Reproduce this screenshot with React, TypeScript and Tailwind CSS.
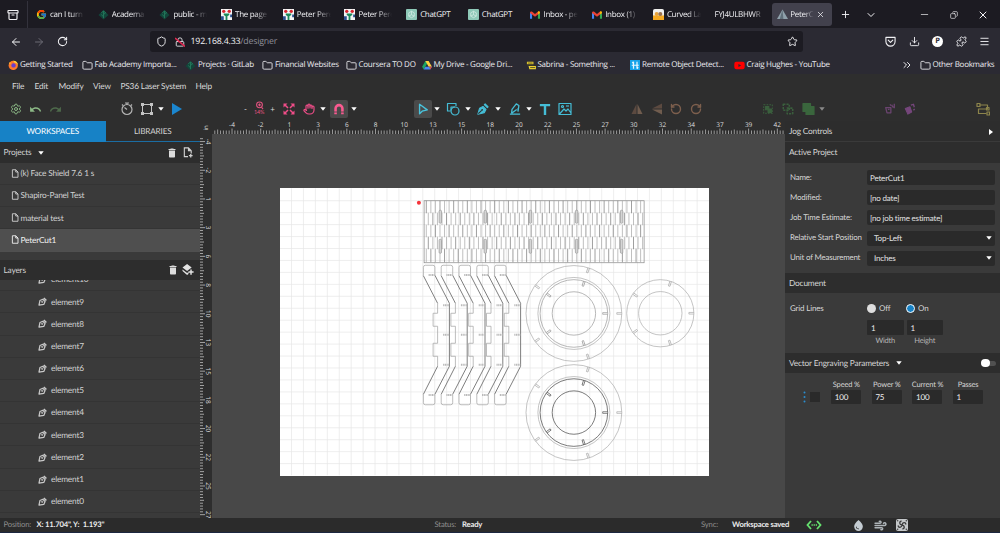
import React from "react";
import {
  Archive, ArrowLeft, ArrowRight, RotateCw, Shield, Star, Download, Menu, Folder, ChevronsRight, Plus,
  ChevronDown, Minus, X, Copy, Settings, Hand, RotateCcw, Puzzle, Lock, Wind, Fan,
} from "lucide-react";
import { FcGoogle } from "react-icons/fc";
import { MdUndo, MdRedo, MdDelete, MdWaterDrop } from "react-icons/md";
import { FaYoutube, FaFirefoxBrowser } from "react-icons/fa";

type Kids = { children?: React.ReactNode };

/* ---------- favicons ---------- */

const Academany = () => (
  <svg viewBox="0 0 12 12" className="size-[11px] shrink-0">
    <path d="M.5 6.500 6 1l5.500 5.500L6 11.500z" fill="#12453a" />
    <path d="M6 2v8M6 6 8.500 4M6 8.500 3.500 6M3.500 4.500 6 2l2.500 2.500" stroke="#23785b" strokeWidth="1" fill="none" />
  </svg>
);
const FabPage = () => (
  <svg viewBox="0 0 12 12" className="size-[11px] shrink-0">
    <rect width="12" height="12" fill="#f4f4f4" />
    <circle cx="3" cy="2.500" r="1.800" fill="#d8252f" />
    <circle cx="9" cy="2.500" r="1.800" fill="#d8252f" />
    <path d="M3 5h6v1.500L7 8v4H5V8L3 6.500z" fill="#1b8a5a" />
    <path d="M0 8h3v4H0zM10 6h2v3h-2z" fill="#2a4f8f" />
  </svg>
);
const Gpt = () => (
  <svg viewBox="0 0 12 12" className="size-[11px] shrink-0">
    <rect width="12" height="12" rx="1" fill="#8ec9b8" />
    <path d="M6 2.500 9 4.200v3.600L6 9.500 3 7.800V4.200zM6 2.500v3.700M3 7.800l3-1.600 3 1.600" stroke="#d9efe8" strokeWidth=".8" fill="none" />
  </svg>
);
const Gmail = () => (
  <svg viewBox="0 0 12 9" className="mx-[.5px] h-[8px] w-[10px] shrink-0">
    <path d="M0 1.500 2.500 3v6H0z" fill="#4285f4" />
    <path d="M12 1.500 9.500 3v6H12z" fill="#34a853" />
    <path d="M0 2C0 .2 1.500-.3 2.700.6L6 3.200 9.300.6C10.500-.3 12 .2 12 2L6 6.500z" fill="#ea4335" />
    <path d="M9.500.5C11-.5 12 .5 12 2L9.500 3.800z" fill="#fbbc04" />
  </svg>
);
const Curved = () => (
  <svg viewBox="0 0 12 12" className="size-[11px] shrink-0">
    <rect width="12" height="12" rx="2" fill="#f0f0ee" />
    <path d="M0 7h12v5H0z" fill="#f4a921" />
    <circle cx="4" cy="5.500" r="2.200" fill="#e8a33a" />
    <circle cx="8" cy="5.500" r="2.200" fill="#99714d" />
  </svg>
);
const Glow = () => (
  <svg viewBox="0 0 12 12" className="size-[11px] shrink-0">
    <path d="M6 .5 12 11H0z" fill="#8fa1ab" />
    <path d="M6 .5 7 11H3z" fill="#60707b" />
  </svg>
);
const Drive = () => (
  <svg viewBox="0 0 12 11" className="h-[9px] w-[10px] shrink-0">
    <path d="M4 0h4L4 7 2 10.500 0 7z" fill="#1da462" />
    <path d="M4 0h4l4 7H8z" fill="#ffcf3f" />
    <path d="M4 7h8l-2 3.500H2z" fill="#4688f4" />
    <path d="M8.500 7H12l-2 3.500z" fill="#e04a3c" />
  </svg>
);
const Sabrina = () => (
  <svg viewBox="0 0 12 11" className="h-[9px] w-[10px] shrink-0">
    <path d="M1 1h8v3H1zM3 6h9v4H4z" fill="#ecd233" />
    <path d="M2 2.500h6M1 5h9M5 8h6" stroke="#47451e" strokeWidth="1" />
  </svg>
);
const Remote = () => (
  <svg viewBox="0 0 12 12" className="size-[10.500px] shrink-0">
    <rect width="12" height="12" fill="#17a3ea" />
    <path d="M4 2v8M8 2v8M2 6h8M2.500 3.500 4 2M8 10l1.500-1.500" stroke="#e9f7ff" strokeWidth="1.400" fill="none" />
  </svg>
);
const Firefox = () => (
  <svg viewBox="0 0 12 12" className="size-[10.500px] shrink-0">
    <circle cx="6" cy="6.200" r="5.300" fill="#ff7a2a" />
    <path d="M6 .8c3.500 0 5.500 2.500 5.400 5.600C11 4.500 9.500 3 7.500 3z" fill="#ffd23c" />
    <path d="M1 4.500C1.500 3 2 2.500 2.500 2c0 1 .5 1.500 1.500 2z" fill="#ffb02e" />
    <path d="M.8 7.500c.8 3 4 4.800 7.200 3.800C5 12 1.500 10.500.8 7.500z" fill="#e8205f" />
    <circle cx="6.300" cy="6.200" r="2.500" fill="#6a3fd0" />
  </svg>
);

/* ---------- browser chrome ---------- */

const tabs: { icon: React.ReactNode; label: string }[] = [
  { icon: <FcGoogle className="size-[11px] shrink-0" />, label: "can I turn" },
  { icon: <Academany />, label: "Academa" },
  { icon: <Academany />, label: "public - m" },
  { icon: <FabPage />, label: "The page" },
  { icon: <FabPage />, label: "Peter Pere" },
  { icon: <FabPage />, label: "Peter Pere" },
  { icon: <Gpt />, label: "ChatGPT" },
  { icon: <Gpt />, label: "ChatGPT" },
  { icon: <Gmail />, label: "Inbox - pe" },
  { icon: <Gmail />, label: "Inbox (1)" },
  { icon: <Curved />, label: "Curved La" },
];

const Fade = ({ children }: Kids) => (
  <span className="w-[40px] overflow-hidden whitespace-nowrap [mask-image:linear-gradient(to_right,black_50%,transparent_85%)]">
    {children}
  </span>
);

const TabBar = () => (
  <div className="flex h-[28px] items-center bg-[#1c1b22] pt-px text-[8px] tracking-[-0.3px] text-[#f2f2f5]">
    <div className="flex h-full w-[28px] items-center border-r border-[#33323c] pl-[7px]">
      <Archive className="size-[12px]" strokeWidth={2.300} />
    </div>
    <div className="flex pl-[8px]">
      {tabs.map((t, i) => (
        <div key={i} className="flex w-[61.700px] items-center gap-[3px]">
          {t.icon}
          {t.label === "ChatGPT" ? <span>{t.label}</span> : <Fade>{t.label}</Fade>}
        </div>
      ))}
    </div>
    <div className="w-[57.300px] overflow-hidden whitespace-nowrap [mask-image:linear-gradient(to_right,black_65%,transparent_88%)]">
      FYJ4ULBHWR
    </div>
    <div className="flex h-[23px] w-[60px] items-center rounded-[3px] bg-[#42414d] pl-[5px]">
      <Glow />
      <span className="ml-[2.500px] w-[23.500px] overflow-hidden whitespace-nowrap [mask-image:linear-gradient(to_right,black_60%,transparent)]">PeterC</span>
      <X className="ml-[2px] size-[9px]" />
    </div>
    <Plus className="ml-[8px] size-[11px]" />
    <ChevronDown className="ml-[14px] size-[12px]" />
    <Minus className="ml-[42px] size-[11px]" strokeWidth={1.500} />
    <Copy className="ml-[20px] size-[8px] -scale-x-100" />
    <X className="ml-[19px] size-[12px]" />
  </div>
);

const Pocket = () => (
  <svg viewBox="0 0 12 12" className="size-[11px]" fill="none" stroke="currentColor" strokeWidth="1.200" strokeLinecap="round" strokeLinejoin="round">
    <path d="M1 1.500h10V6a5 5 0 0 1-10 0zM3.500 4.500 6 7l2.500-2.500" />
  </svg>
);

const NavBar = () => (
  <div className="flex h-[27px] items-center bg-[#2b2a33] text-[#f2f2f5]">
    <ArrowLeft className="ml-[10px] size-[12px]" />
    <ArrowRight className="ml-[11px] size-[12px] text-[#6c6b75]" />
    <RotateCw className="ml-[12px] size-[11px]" strokeWidth={2.200} />
    <div className="ml-[82px] flex h-[21px] w-[653px] items-center rounded-[3px] bg-[#1c1b22]">
      <Shield className="ml-[5.500px] size-[11px]" />
      <span className="relative ml-[8px] flex">
        <Lock className="size-[10px]" />
        <svg viewBox="0 0 10 10" className="absolute inset-0 size-[10px]"><path d="M0 1 10 9.500" stroke="#e22850" strokeWidth="1.600" /></svg>
      </span>
      <span className="ml-[6px] pt-px text-[8.800px] tracking-[-0.2px] whitespace-nowrap">192.168.4.33<span className="text-[#8f8f99]">/designer</span></span>
      <Star className="mr-[5px] ml-auto size-[11px]" />
    </div>
    <div className="ml-[82px] flex items-center gap-[12.500px]">
      <Pocket />
      <Download className="size-[11px]" />
      <span className="flex size-[11px] items-center justify-center rounded-full bg-white text-[7.500px] font-bold text-[#2b2a33]">P</span>
      <Puzzle className="size-[11px]" />
      <Menu className="size-[11px]" />
    </div>
  </div>
);

const Fold = () => <Folder className="size-[11px] shrink-0" strokeWidth={1.900} />;

const Mark = ({ icon, label, w }: { icon: React.ReactNode; label: string; w: string }) => (
  <div className={`flex items-center gap-[2px] whitespace-nowrap ${w}`}>{icon}<span>{label}</span></div>
);

const Bookmarks = () => (
  <div className="flex h-[19px] items-center bg-[#2b2a33] pt-px pl-[7.500px] text-[8px] tracking-[-0.27px] text-[#ececf0]">
    <Mark w="w-[74px]" icon={<Firefox />} label="Getting Started" />
    <Mark w="w-[103.500px]" icon={<Fold />} label="Fab Academy Importa..." />
    <Mark w="w-[77px]" icon={<Academany />} label="Projects · GitLab" />
    <Mark w="w-[83.500px]" icon={<Fold />} label="Financial Websites" />
    <Mark w="w-[76px]" icon={<Fold />} label="Coursera TO DO" />
    <Mark w="w-[104px]" icon={<Drive />} label="My Drive - Google Dri..." />
    <Mark w="w-[104px]" icon={<Sabrina />} label="Sabrina - Something ..." />
    <Mark w="w-[104px]" icon={<Remote />} label="Remote Object Detect..." />
    <Mark w="w-[167px]" icon={<FaYoutube className="size-[11px] text-[#ff0000]" />} label="Craig Hughes - YouTube" />
    <ChevronsRight className="size-[12px]" />
    <Mark w="ml-[7px]" icon={<Fold />} label="Other Bookmarks" />
  </div>
);

/* ---------- application menu and toolbar ---------- */

const MenuBar = () => (
  <div className="flex h-[23px] items-center bg-[#2e2e2e] pt-px pl-[12px] text-[8.300px] text-[#d8d8d8]">
    <span className="w-[22.500px]">File</span>
    <span className="w-[24px]">Edit</span>
    <span className="w-[34.500px]">Modify</span>
    <span className="w-[27.500px]">View</span>
    <span className="w-[75px] whitespace-nowrap">PS36 Laser System</span>
    <span>Help</span>
  </div>
);

const Caret = ({ className = "" }: { className?: string }) => (
  <svg viewBox="0 0 6 4" className={`h-[4px] w-[6px] shrink-0 ${className}`}><path d="M.3.3h5.400L3 3.700z" fill="currentColor" /></svg>
);

const Svg = ({ className, children }: Kids & { className: string }) => (
  <svg viewBox="0 0 14 14" className={`shrink-0 ${className}`} fill="none" stroke="currentColor" strokeWidth="1.200" strokeLinejoin="round">
    {children}
  </svg>
);

const Toolbar = () => (
  <div className="flex h-[24px] items-center bg-[#2e2e2e] text-[#d8d8d8] [&>svg]:shrink-0">
    <Settings className="ml-[9.500px] size-[12px] text-[#8cb986]" />
    <MdUndo className="ml-[7px] size-[13px] text-[#8cb986]" />
    <MdRedo className="ml-[7px] size-[13px] text-[#4e6a4b]" />
    <Svg className="ml-[58.500px] size-[14px] text-[#b5b5b5]">
      <circle cx="7" cy="7.500" r="5" /><path d="M5 1h4M7 1v1.500M2 2.500l1 1M12 2.500l-1 1M4.500 5.500 7 7.500" />
    </Svg>
    <Svg className="ml-[6px] size-[14px] text-[#c4c4c4]">
      <path d="M2.500 2.500h9v9h-9z" strokeWidth="1" />
      <path d="M1 1h3v3H1zM10 1h3v3h-3zM1 10h3v3H1zM10 10h3v3h-3z" fill="currentColor" stroke="none" />
    </Svg>
    <Caret className="ml-[4px] text-white" />
    <svg viewBox="0 0 12 14" className="ml-[7px] h-[14px] w-[12px] text-[#1b86cf]"><path d="M1 1v12l10-6z" fill="currentColor" /></svg>
    <span className="ml-[59.500px] w-[6px] text-center text-[8px]">-</span>
    <div className="ml-[3.500px] flex w-[14px] flex-col items-center text-[#e0527f]">
      <Svg className="size-[9px]">
        <circle cx="7" cy="6" r="4.500" strokeWidth="1.700" /><path d="M5 6h4M7 4v4M10 9.500l2.500 3" strokeWidth="1.700" />
      </Svg>
      <span className="text-[5.500px] leading-[7px]">14%</span>
    </div>
    <span className="ml-[3.500px] w-[6px] text-center text-[8px]">+</span>
    <Svg className="ml-[6.500px] size-[14px] text-[#ef4d88]">
      <path d="M1.500 1.500h4l-4 4zM12.500 1.500h-4l4 4zM1.500 12.500h4l-4-4zM12.500 12.500h-4l4-4z" fill="currentColor" stroke="none" />
      <path d="m3 3 3 3M11 3 8 6M3 11l3-3M11 11 8 8" strokeWidth="1.500" />
    </Svg>
    <Hand className="ml-[6.500px] size-[12px] text-[#ef4d88]" strokeWidth={2.300} />
    <Caret className="ml-[5px] text-white" />
    <span className="ml-[4.500px] flex size-[18px] shrink-0 items-center justify-center rounded-[2px] bg-[#4a4a4a] text-[#fa5a90]">
      <Svg className="size-[12px]">
        <path d="M3 13V6.500a4 4 0 0 1 8 0V13" strokeWidth="3" /><path d="M1 10.500h5M8 10.500h5" stroke="#4a4a4a" strokeWidth="1" />
      </Svg>
    </span>
    <Caret className="ml-[2.500px] text-white" />
    <span className="ml-[57.500px] flex size-[18px] shrink-0 items-center justify-center rounded-[2px] bg-[#4a4a4a] text-[#49c3dc]">
      <Svg className="size-[12px]"><path d="M3 1.500v11l3-3 6-1.500z" strokeWidth="1.600" /></Svg>
    </span>
    <Caret className="ml-[2px] text-white" />
    <Svg className="ml-[6px] size-[14px] text-[#45bdd6]"><path d="M4.500 9H1.500V1.500H10V4" /><circle cx="9" cy="9" r="4" /><path d="M5 8.500V5h4" /></Svg>
    <Caret className="ml-[4.500px] text-white" />
    <Svg className="ml-[6.500px] size-[12px] text-[#45bdd6]">
      <path d="m1 13 2-7 4-2 3.500 3.500-2 4z" fill="currentColor" /><path d="m8.500 2 3.500 3.500 1-1L9.500 1z" fill="currentColor" /><path d="m1.500 12.500 4-4" stroke="#2e2e2e" /><circle cx="6" cy="8" r="1" fill="#2e2e2e" stroke="none" />
    </Svg>
    <Caret className="ml-[6px] text-white" />
    <Svg className="ml-[7.500px] size-[12px] text-[#45bdd6]"><path d="M1 13h12M3 12l.5-4.500L8.500 1l3 2-1 7M3 12l6-4.500M10.500 6v4" strokeWidth="1.500" /></Svg>
    <Caret className="ml-[5.500px] text-white" />
    <Svg className="ml-[7px] size-[12px] text-[#45bdd6]"><path d="M1 2.500h12M7 2v12" strokeWidth="2.800" /></Svg>
    <Svg className="ml-[6.500px] size-[14px] text-[#45bdd6]">
      <path d="M1 1.500h12v11H1zM1.500 12 6 7l2 2 2-2 3 4" /><circle cx="4.500" cy="4.500" r="1" /><path d="M8 4h3" />
    </Svg>
    <svg viewBox="0 0 12 12" className="ml-[59.500px] size-[12px]"><path d="M5.500 1v10H.5z" fill="#5c4a40" /><path d="M6.500 1v10h5z" fill="#705c4e" /></svg>
    <svg viewBox="0 0 12 12" className="ml-[8px] size-[12px]"><path d="M11 .5v5H1z" fill="#5c4a40" /><path d="M11 11.500v-5H1z" fill="#705c4e" /></svg>
    <RotateCcw className="ml-[7px] size-[12px] text-[#7d5f4d]" strokeWidth={2.800} />
    <RotateCw className="ml-[8px] size-[12px] text-[#7d5f4d]" strokeWidth={2.800} />
    <Svg className="ml-[60px] size-[12px] text-[#3a5f3d]">
      <path d="M2 2h10v10H2z" strokeDasharray="2 1.300" /><path d="M4 4h4v4H4zM7 7h4v4H7z" fill="currentColor" />
    </Svg>
    <Svg className="ml-[8px] size-[12px] text-[#3a5f3d]">
      <path d="M1.500 1.500h7v7h-7zM6 6h6.500v6.500H6z" strokeDasharray="2.500 1.200" strokeWidth="1.800" />
    </Svg>
    <Svg className="ml-[7px] size-[14px] text-[#3a663d]"><path d="M2 1.500h7.500v3H13v8H5v-3H2z" fill="currentColor" /></Svg>
    <Caret className="ml-[3.500px] text-[#8a8a8a]" />
    <Svg className="ml-[59.500px] size-[12px] text-[#6b4470]"><path d="M2 5.500h6v6H3.500zM4.500 7.500h2M9 2l1 2.500 2 .5M12 1v5M8 3l-1-1.500" strokeWidth="1.500" /></Svg>
    <Svg className="ml-[8px] size-[12px] text-[#75467b]"><path d="M1.500 6.500 7 4.500l2 6-4.500 2.500z" fill="currentColor" /><path d="M8 2.500 11 1.500l1 3.500M11 8.500l1.500-1.500" strokeWidth="1.600" /></Svg>
    <Svg className="ml-[60px] size-[14px] text-[#8c844b]">
      <path d="M3.500 3h8v4h-9v4.500h8" /><path d="M1 1.500h3v3H1zM11 10h2.500v3H11zM10.500 5.500h2.500v2.500h-2.500z" />
    </Svg>
  </div>
);

/* ---------- left sidebar ---------- */

const Trash = () => <MdDelete className="size-[12px] text-[#dcdcdc]" />;

const PenIcon = () => (
  <Svg className="size-[9px] text-[#c9c9c9]">
    <path d="m1.500 12.500 1.500-7 4.500-2L11 7l-2 4.500z" strokeWidth="1.900" /><circle cx="6.500" cy="7.500" r="1" strokeWidth="1.500" />
    <path d="m9 1.500 4 4" strokeWidth="2.500" />
  </Svg>
);

const Page = ({ plus }: { plus?: boolean }) => (
  <svg viewBox="0 0 10 12" className={plus ? "h-[11px] w-[10px]" : "h-[9px] w-[8px]"} fill="none" stroke="currentColor" strokeWidth="1.200">
    <path d={plus ? "M5 10.500H1V1h4.500L8.500 4v3M5.500 1v3h3" : "M1.500 1h4.500L9 4v7H1.500zM6 1v3h3"} />
    {plus && <path d="M8 7.500v4M6 9.500h4" strokeWidth="1.400" />}
  </svg>
);

const projects = ["(k) Face Shield 7.6 1 s", "Shapiro-Panel Test", "material test", "PeterCut1"];
const layers = [10, 9, 8, 7, 6, 5, 4, 3, 2, 1, 0];

const Sidebar = () => (
  <aside className="flex w-[200px] shrink-0 flex-col bg-[#3a3a3a] text-[8.300px] text-[#d2d2d2]">
    <div className="flex h-[21px] shrink-0 text-[8.200px]">
      <div className="flex w-[105.500px] items-center justify-center bg-[#1782c6] text-white">WORKSPACES</div>
      <div className="flex flex-1 items-center justify-center border-b border-[#1b6da3] bg-[#2e2e2e] pt-px">LIBRARIES</div>
    </div>
    <div className="flex h-[21px] shrink-0 items-center bg-[#2d2d2d] pl-[3.500px]">
      <span>Projects</span>
      <Caret className="ml-[7px] text-white" />
      <div className="mr-[7px] ml-auto flex gap-[5px]"><Trash /><Page plus /></div>
    </div>
    {projects.map((p, i) => (
      <div key={p} className={`flex h-[22.150px] shrink-0 items-center gap-[2px] border-b pl-[10.500px] ${i === 3 ? "border-[#505050] bg-[#4f4f4f] text-[#f2f2f2]" : "border-[#343434]"}`}>
        <Page />
        <span>{p}</span>
      </div>
    ))}
    <div className="h-[8.400px] shrink-0" />
    <div className="flex h-[20px] shrink-0 items-center bg-[#2d2d2d] pl-[3.500px]">
      <span>Layers</span>
      <div className="mr-[6px] ml-auto flex gap-[3px]">
        <Trash />
        <svg viewBox="0 0 13 12" className="h-[11px] w-[12px]" fill="#e2e2e2">
          <path d="m5.500 0 5 3.800-5 3.700L.5 3.800zM.5 6l5 3.700L7 8.800V11l-1.500.9L.5 7.500zM9 6h1.600v2h2v1.600h-2v2H9v-2H7V8h2z" />
        </svg>
      </div>
    </div>
    <div className="min-h-0 flex-1 overflow-hidden">
      <div className="-mt-[11px]">
        {layers.map((n) => (
          <div key={n} className="flex h-[22.200px] items-center gap-[4.500px] border-b border-[#343434] pl-[37.500px]">
            <PenIcon />
            <span>element{n}</span>
          </div>
        ))}
      </div>
    </div>
  </aside>
);

/* ---------- rulers and canvas ---------- */

const marks = [-4, -2, 1, 3, 6, 8, 10, 13, 15, 18, 20, 22, 25, 27, 30, 32, 34, 37, 39, 42];
const STEP = 28.7;

const HRuler = () => (
  <svg viewBox="200 0 585 13" className="h-[13px] w-[585px] shrink-0 bg-[#2e2e2e] tracking-normal">
    {Array.from({ length: 199 }, (_, i) => {
      const x = 214.800 + (i * STEP) / 10;
      const n = i - 6;
      return <path key={i} d={`M${x} ${n % 10 === 0 ? 7.5 : n % 5 === 0 ? 8.5 : 9.5}V13`} stroke="#b5b5b5" strokeWidth=".8" />;
    })}
    {marks.map((m, i) => (
      <text key={m} x={232 + i * STEP} y="5.500" textAnchor="middle" fontSize="6.500" fill="#dedede" className="font-['Open_Sans']">{m}</text>
    ))}
    <text transform="translate(207.500 9.500) rotate(-90)" fontSize="6" fill="#dedede" className="font-['Open_Sans']">in</text>
  </svg>
);

const VRuler = () => (
  <svg viewBox="0 134 12 384" className="h-full w-[12px] shrink-0 bg-[#2e2e2e] tracking-normal">
    {Array.from({ length: 132 }, (_, i) => {
      const y = 138.700 + (i * STEP) / 10;
      const n = i - 1;
      return <path key={i} d={`M0 ${y}H${n % 10 === 0 ? 5 : n % 5 === 0 ? 4 : 3}`} stroke="#c0c0c0" strokeWidth=".8" />;
    })}
    {marks.slice(0, 14).map((m, i) => (
      <text key={m} transform={`translate(6.200 ${141.6 + i * STEP}) rotate(90)`} textAnchor="middle" fontSize="6.500" fill="#dedede" className="font-['Open_Sans']">{m}</text>
    ))}
  </svg>
);

const Hinge = () => {
  const rows = [200.5, 212.5, 224.5, 236.500, 248.500];
  return (
    <g fill="none" stroke="#999" strokeWidth=".7">
      <rect x="424" y="200.500" width="220" height="62" stroke="#888" />
      {rows.map((y, r) =>
        Array.from({ length: 48 }, (_, c) => (
          <path key={`${r}-${c}`} stroke={c % 3 === r % 3 ? "#777" : "#a5a5a5"} d={`M${426.2 + c * 4.56 + (r % 2 ? 2 : 0)} ${y}v${r === 4 ? 13.5 : 12.5}`} />
        ))
      )}
      {[440.2, 485.200, 530.300, 576.500, 621.500].map((x) => (
        <g key={x} stroke="#999">
          <rect x={x - 1.2} y="210" width="2.400" height="13" rx="1" fill="#d5d5d5" />
          <rect x={x - 1.2} y="239" width="2.400" height="14" rx="1" fill="#d5d5d5" />
        </g>
      ))}
    </g>
  );
};

const Bracket = ({ dx }: { dx: number }) => (
  <g transform={`translate(${dx} 0)`} fill="none" strokeWidth=".7">
    <path stroke="#a0a0a0" d="M423.300 275.500V267q0-2 2-2h7.500q2 0 2 2v8M437.500 303v10h-4.500v13h4.500v17h-4.500v13h4.500v10M423.300 394v8.500q0 2 2 2h7.500q2 0 2-2V394" />
    <path stroke="#707070" strokeWidth=".9" d="m423.300 275.500 14.200 27.500M434.800 275l14.500 28v63l-14.500 28M437.500 366l-14.200 28" />
    <g stroke="#bbb" strokeWidth="2" strokeDasharray="1.200 .5">
      <path d="M428.500 274.800h6M443 305h6M443 334.500h6M443 364.500h6M428.500 394.800h6" />
    </g>
  </g>
);

const Notches = ({ cx, cy, r, color }: { cx: number; cy: number; r: number; color: string }) => (
  <g stroke={color} fill="none">
    {[0, 72, 144, 216, 288].map((a) => (
      <path key={a} transform={`translate(${cx} ${cy}) rotate(${a})`} d={`M${r} -.8H${r - 5}M${r} .8H${r - 5}v-1.600`} strokeWidth=".7" />
    ))}
  </g>
);

const Ring = ({ cx, cy, dark }: { cx: number; cy: number; dark?: boolean }) => (
  <g fill="none" stroke="#aaa" strokeWidth=".7">
    <circle cx={cx} cy={cy} r="47.900" />
    <circle cx={cx} cy={cy} r="36" />
    <circle cx={cx} cy={cy} r="33.800" stroke={dark ? "#444" : "#999"} />
    <circle cx={cx} cy={cy} r="21.700" stroke={dark ? "#444" : "#999"} />
    <Notches cx={cx} cy={cy} r={47.9} color="#aaa" />
    <Notches cx={cx} cy={cy} r={33.800} color={dark ? "#555" : "#999"} />
  </g>
);

const Drawing = () => (
  <svg viewBox="279.900 188 429.500 287" className="size-full">
    <g stroke="#e6e6e6" strokeWidth=".7">
      {Array.from({ length: 35 }, (_, i) => <path key={i} d={`M${279.5 + (i + 1) * 11.930} 188v287`} />)}
      {Array.from({ length: 23 }, (_, i) => <path key={i} d={`M279.500 ${188.5 + (i + 1) * 11.950}h430`} />)}
    </g>
    <Hinge />
    {[0, 17.8, 35.600, 53.400, 71.200].map((dx) => <Bracket key={dx} dx={dx} />)}
    <Ring cx={573.8} cy={313.200} />
    <Ring cx={573.8} cy={412.300} dark />
    <g fill="none" stroke="#aaa" strokeWidth=".7">
      <circle cx="660.200" cy="313" r="33.600" />
      <circle cx="660.200" cy="313" r="21.700" />
      <Notches cx={660.2} cy={313} r={33.600} color="#aaa" />
    </g>
    <circle cx="418.800" cy="202.500" r="2" fill="#f5333a" />
  </svg>
);

const Canvas = () => (
  <main className="flex w-[585px] shrink-0 flex-col">
    <HRuler />
    <div className="flex min-h-0 flex-1">
      <VRuler />
      <div className="flex-1 bg-[#484848] pt-[54px] pl-[67.500px]">
        <div className="h-[287.500px] w-[429.500px] bg-white"><Drawing /></div>
      </div>
    </div>
  </main>
);

/* ---------- properties panel ---------- */

const Field = ({ label, children }: Kids & { label: string }) => (
  <div className="flex h-[20.200px] items-center">
    <span className="w-[77px] text-[7.900px] whitespace-nowrap">{label}</span>
    <div className="flex h-[15px] w-[128px] items-center rounded-[2px] bg-[#2a2a2a] px-[3px] text-[8px] text-[#e2e2e2]">{children}</div>
  </div>
);

const Cell = ({ head, value, w }: { head: string; value: string; w: string }) => (
  <div className={`flex flex-col items-center ${w}`}>
    <span className="text-[7.500px] leading-[11px] whitespace-nowrap">{head}</span>
    <span className="flex h-[14px] w-[30px] items-center rounded-[1px] bg-[#2a2a2a] pl-[3.500px] text-[8px] text-[#eee]">{value}</span>
  </div>
);

const Panel = () => (
  <aside className="flex flex-1 flex-col bg-[#3a3a3a] text-[8.300px] text-[#d6d6d6]">
    <div className="flex h-[21px] items-center justify-between border-b border-[#3a3a3a] bg-[#2d2d2d] pt-px pr-[7px] pl-[4px]">
      <span>Jog Controls</span>
      <svg viewBox="0 0 4 6" className="h-[6px] w-[4px]"><path d="M0 0v6l4-3z" fill="white" /></svg>
    </div>
    <div className="flex h-[21px] items-center bg-[#2d2d2d] pl-[4px]">Active Project</div>
    <div className="h-[110px] pt-[4.500px] pl-[5px]">
      <Field label="Name:">PeterCut1</Field>
      <Field label="Modified:">[no date]</Field>
      <Field label="Job Time Estimate:">[no job time estimate]</Field>
      <Field label="Relative Start Position"><span className="ml-[4px]">Top-Left</span><Caret className="ml-auto text-white" /></Field>
      <Field label="Unit of Measurement"><span className="ml-[4px]">Inches</span><Caret className="ml-auto text-white" /></Field>
    </div>
    <div className="flex h-[20px] items-center bg-[#2d2d2d] pl-[4px]">Document</div>
    <div className="h-[60px] pt-[8px] pl-[5px] text-[8px]">
      <div className="flex h-[14px] items-center">
        <span className="w-[77px]">Grid Lines</span>
        <span className="size-[9px] rounded-full bg-[#dedede]" />
        <span className="ml-[3px] w-[27px]">Off</span>
        <span className="size-[9px] rounded-full border-[1.500px] border-white bg-[#1782c6]" />
        <span className="ml-[3px]">On</span>
      </div>
      <div className="mt-[5px] ml-[77px] flex gap-[3px] text-[7.500px]">
        {["Width", "Height"].map((n) => (
          <div key={n} className="flex w-[36.500px] flex-col items-center text-[#b5b5b5]">
            <span className="flex h-[15px] w-full items-center rounded-[1px] bg-[#2a2a2a] pl-[4px] text-[8px] text-[#eee]">1</span>
            <span className="leading-[12px]">{n}</span>
          </div>
        ))}
      </div>
    </div>
    <div className="flex h-[20px] items-center bg-[#2d2d2d] pl-[4px]">
      <span>Vector Engraving Parameters</span>
      <Caret className="ml-[7px] text-white" />
      <div className="mr-[4px] ml-auto flex h-[5px] w-[15px] items-center rounded-full bg-[#505050]">
        <span className="size-[8.500px] rounded-full bg-white" />
      </div>
    </div>
    <div className="flex items-end pt-[6px] pl-[18px]">
      <div className="mb-[1px] flex h-[13px] items-center gap-[4px]">
        <svg viewBox="0 0 3 12" className="h-[12px] w-[3px]" fill="#2a8ed0">
          <circle cx="1.500" cy="1.500" r="1" /><circle cx="1.500" cy="6" r="1" /><circle cx="1.500" cy="10.500" r="1" />
        </svg>
        <span className="size-[10px] bg-[#2a2a2a]" />
      </div>
      <div className="ml-[6px] flex">
        <Cell w="w-[40.600px]" head="Speed %" value="100" />
        <Cell w="w-[40.600px]" head="Power %" value="75" />
        <Cell w="w-[40.600px]" head="Current %" value="100" />
        <Cell w="w-[40.600px]" head="Passes" value="1" />
      </div>
    </div>
  </aside>
);

const Chiller = () => (
  <svg viewBox="0 0 12 12" className="ml-[9px] size-[12px]">
    <rect width="12" height="12" rx="2" fill="#c4c7c9" />
    <path d="M6 6C3 5.500 3 2.500 5.500 2M6 6c.5-3 3.500-3 4-.5M6 6c3 .5 3 3.500.5 4M6 6c-.5 3-3.500 3-4 .5" fill="none" stroke="#3a3a3a" strokeWidth="1.300" />
    <circle cx="1.700" cy="1.700" r=".7" fill="#3a3a3a" /><circle cx="10.300" cy="1.700" r=".7" fill="#3a3a3a" />
    <circle cx="1.700" cy="10.300" r=".7" fill="#3a3a3a" /><circle cx="10.300" cy="10.300" r=".7" fill="#3a3a3a" />
  </svg>
);

const StatusBar = () => (
  <footer className="flex h-[15px] items-center border-b border-[#1c2740] bg-[#2b2b2b] text-[7.700px] whitespace-nowrap text-[#8f8f8f]">
    <span className="ml-[3.500px] w-[33px]">Position:</span>
    <span className="w-[398px] font-bold text-[#ececec]">X: 11.704", Y:&nbsp; 1.193"</span>
    <span className="w-[27.500px]">Status:</span>
    <span className="w-[239px] font-bold text-[#ececec]">Ready</span>
    <span className="w-[31px]">Sync:</span>
    <span className="w-[74px] font-bold text-[#ececec]">Workspace saved</span>
    <svg viewBox="0 0 16 10" className="h-[10px] w-[16px]" fill="none" stroke="#66e36f" strokeWidth="1.800">
      <path d="M5 1 1.500 5 5 9M11 1l3.500 4L11 9" /><path d="M5.500 5h5.500" strokeWidth="1.400" strokeDasharray="1.300 .8" />
    </svg>
    <MdWaterDrop className="ml-[30px] size-[13px] text-[#c4ccd2]" />
    <Wind className="ml-[9px] size-[13px] text-[#aeb4b8]" strokeWidth={2.800} />
    <Chiller />
  </footer>
);

export default function App() {
  return (
    <div className="flex h-[533px] w-[1000px] flex-col overflow-hidden bg-[#2e2e2e] font-[Lato,sans-serif] tracking-[-0.18px] [text-rendering:geometricPrecision]">
      <div className="font-['Open_Sans','Noto_Sans',sans-serif]">
        <TabBar />
        <NavBar />
        <Bookmarks />
      </div>
      <MenuBar />
      <Toolbar />
      <div className="flex min-h-0 flex-1">
        <Sidebar />
        <Canvas />
        <Panel />
      </div>
      <StatusBar />
    </div>
  );
}
